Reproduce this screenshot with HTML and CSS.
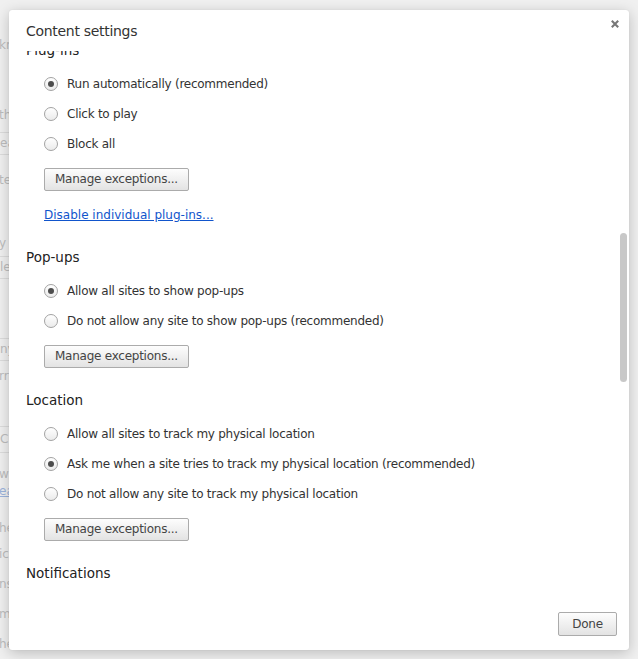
FILE: index.html
```html
<!DOCTYPE html>
<html lang="en">
<head>
<meta charset="utf-8">
<title>Content settings</title>
<link rel="stylesheet" href="styles.css">
</head>
<body>
<div class="page">
  <div class="backdrop">
    <div class="frag g37">know</div>
    <div class="frag g54">this</div>
    <div class="frag-box g9">earch</div>
    <div class="frag g17">text</div>
    <div class="frag g47">y</div>
    <div class="frag-box g5">le</div>
    <div class="frag-box g59">ny</div>
    <div class="frag g7">rr</div>
    <div class="frag-box tall g42">C</div>
    <div class="frag g13">w</div>
    <div class="frag link-frag g1">ea</div>
    <div class="frag g21">he</div>
    <div class="frag g10">ic</div>
    <div class="frag g14">ns</div>
    <div class="frag g14">m</div>
    <div class="frag g14">he</div>
  </div>

  <div class="dialog">
    <div class="dialog-header">
      <h1 class="dialog-title">Content settings</h1>
      <button class="close" aria-label="Close">
        <svg width="8" height="8" viewBox="0 0 8 8"><path d="M0.8 0.8 L7.2 7.2 M7.2 0.8 L0.8 7.2" stroke="#777" stroke-width="2.1" fill="none"/></svg>
      </button>
    </div>

    <div class="dialog-body">
      <div class="content">
        <section class="section">
          <h2 class="section-title">Plug-ins</h2>
          <div class="radio-row"><span class="radio checked"></span><span class="label">Run automatically (recommended)</span></div>
          <div class="radio-row"><span class="radio"></span><span class="label">Click to play</span></div>
          <div class="radio-row"><span class="radio"></span><span class="label">Block all</span></div>
          <button class="btn">Manage exceptions...</button>
          <a class="link" href="#">Disable individual plug-ins...</a>
        </section>

        <section class="section">
          <h2 class="section-title">Pop-ups</h2>
          <div class="radio-row"><span class="radio checked"></span><span class="label">Allow all sites to show pop-ups</span></div>
          <div class="radio-row"><span class="radio"></span><span class="label">Do not allow any site to show pop-ups (recommended)</span></div>
          <button class="btn">Manage exceptions...</button>
        </section>

        <section class="section">
          <h2 class="section-title">Location</h2>
          <div class="radio-row"><span class="radio"></span><span class="label">Allow all sites to track my physical location</span></div>
          <div class="radio-row"><span class="radio checked"></span><span class="label">Ask me when a site tries to track my physical location (recommended)</span></div>
          <div class="radio-row"><span class="radio"></span><span class="label">Do not allow any site to track my physical location</span></div>
          <button class="btn">Manage exceptions...</button>
        </section>

        <section class="section">
          <h2 class="section-title">Notifications</h2>
          <div class="radio-row"><span class="radio"></span><span class="label">Allow all sites to show desktop notifications</span></div>
        </section>
      </div>
      <div class="scrollbar"></div>
    </div>

    <div class="dialog-footer">
      <button class="btn btn-done">Done</button>
    </div>
  </div>
</div>
</body>
</html>
```

FILE: styles.css
```css
* { box-sizing: border-box; }

html, body {
  margin: 0;
  padding: 0;
}

body {
  width: 638px;
  height: 659px;
  overflow: hidden;
  background: #f0f0f0;
  font-family: "DejaVu Sans", "Liberation Sans", sans-serif;
}

.page {
  position: relative;
  width: 638px;
  height: 659px;
  overflow: hidden;
}

/* faded page behind the dialog */
.backdrop {
  display: flex;
  flex-direction: column;
  width: 120px;
  font-size: 12px;
  color: #bdbdbd;
}

.frag {
  height: 16px;
  line-height: 16px;
  white-space: nowrap;
  margin-left: -1px;
}

.frag-box {
  height: 23px;
  line-height: 21px;
  border-top: 1px solid #dcdcdc;
  border-bottom: 1px solid #dcdcdc;
  white-space: nowrap;
}

.frag-box.tall { height: 27px; line-height: 25px; }

.link-frag {
  color: #9db4dc;
  text-decoration: underline;
}

.g1 { margin-top: 1px; }
.g5 { margin-top: 5px; }
.g7 { margin-top: 7px; }
.g9 { margin-top: 9px; }
.g10 { margin-top: 10px; }
.g13 { margin-top: 13px; }
.g14 { margin-top: 14px; }
.g17 { margin-top: 17px; }
.g21 { margin-top: 21px; }
.g37 { margin-top: 37px; }
.g42 { margin-top: 42px; }
.g47 { margin-top: 47px; }
.g54 { margin-top: 54px; }
.g59 { margin-top: 59px; }

/* dialog */
.dialog {
  position: absolute;
  left: 9px;
  top: 10px;
  width: 620px;
  height: 640px;
  background: #fff;
  border-radius: 3px;
  box-shadow: 0 3px 14px rgba(0, 0, 0, 0.22), 0 0 1px rgba(0, 0, 0, 0.15);
  display: flex;
  flex-direction: column;
  overflow: hidden;
}

.dialog-header {
  position: relative;
  height: 41px;
  flex: none;
  padding: 12px 0 0 17px;
}

.dialog-title {
  margin: 0;
  font-size: 14px;
  line-height: 18px;
  font-weight: normal;
  letter-spacing: -0.3px;
  color: #333;
}

.close {
  position: absolute;
  top: 10px;
  right: 10px;
  width: 8px;
  height: 8px;
  padding: 0;
  border: 0;
  background: none;
  display: flex;
}

.dialog-body {
  position: relative;
  flex: 1;
  overflow: hidden;
  padding-left: 17px;
}

.content {
  margin-top: -10px;
  display: flex;
  flex-direction: column;
}

.section {
  display: flex;
  flex-direction: column;
  align-items: flex-start;
  margin-bottom: 23px;
}

.section:first-child { margin-bottom: 25px; }

.section-title {
  margin: 0 0 10px;
  height: 18px;
  font-size: 13.5px;
  line-height: 18px;
  font-weight: normal;
  color: #222;
}

.radio-row {
  display: flex;
  align-items: center;
  height: 30px;
  margin-left: 18px;
}

.radio {
  width: 14px;
  height: 14px;
  border-radius: 50%;
  border: 1px solid #a3a3a3;
  background: linear-gradient(#ffffff, #ebebeb);
  display: flex;
  align-items: center;
  justify-content: center;
  flex: none;
}

.radio.checked::after {
  content: "";
  width: 6px;
  height: 6px;
  border-radius: 50%;
  background: #4d4d4d;
}

.label {
  margin-left: 9px;
  font-size: 12px;
  letter-spacing: -0.25px;
  color: #333;
  white-space: nowrap;
}

.btn {
  height: 23px;
  padding: 0 10px;
  border: 1px solid #ababab;
  border-radius: 2px;
  background: linear-gradient(#fdfdfd, #e3e3e3);
  font-family: "DejaVu Sans", "Liberation Sans", sans-serif;
  font-size: 12px;
  letter-spacing: -0.25px;
  color: #444;
  line-height: 21px;
}

.section .btn {
  margin: 9px 0 0 18px;
}

.link {
  display: block;
  margin: 16px 0 0 18px;
  font-size: 12px;
  line-height: 16px;
  color: #1155cc;
  text-decoration: underline;
}

.scrollbar {
  position: absolute;
  top: 182px;
  right: 2px;
  width: 7px;
  height: 149px;
  border-radius: 4px;
  background: #c8c8c8;
}

.dialog-footer {
  height: 51px;
  flex: none;
  display: flex;
  justify-content: flex-end;
  align-items: flex-start;
  padding: 13px 12px 0 0;
}

.btn-done {
  height: 24px;
  width: 59px;
  padding: 0;
  line-height: 22px;
}
```
